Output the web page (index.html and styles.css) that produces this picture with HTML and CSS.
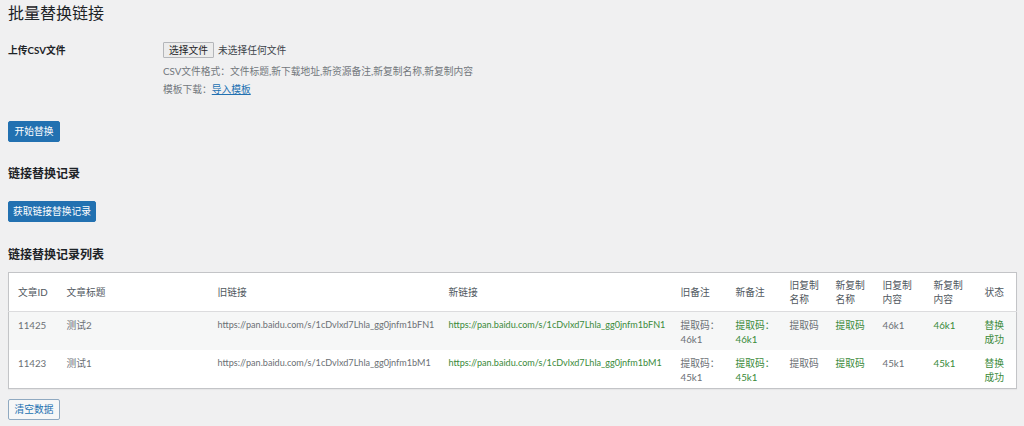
FILE: index.html
```html
<!DOCTYPE html>
<html lang="zh-CN">
<head>
<meta charset="utf-8">
<title>批量替换链接</title>
<link rel="stylesheet" href="styles.css">
</head>
<body>
<div class="wrap">
  <h1 class="page-title">批量替换链接</h1>

  <div class="form-row">
    <div class="form-label">上传CSV文件</div>
    <div class="form-field">
      <div class="file-input"><span class="file-btn">选择文件</span><span class="file-name">未选择任何文件</span></div>
      <p class="desc">CSV文件格式：文件标题,新下载地址,新资源备注,新复制名称,新复制内容</p>
      <p class="desc">模板下载：<a class="link" href="#">导入模板</a></p>
    </div>
  </div>

  <button class="btn btn-primary btn-start">开始替换</button>

  <h2 class="section-title">链接替换记录</h2>
  <button class="btn btn-primary btn-fetch">获取链接替换记录</button>

  <h2 class="section-title section-list">链接替换记录列表</h2>

  <table class="records">
    <colgroup>
      <col class="c-id"><col class="c-title"><col class="c-old"><col class="c-new">
      <col class="c-oldnote"><col class="c-newnote"><col class="c-oldname"><col class="c-newname">
      <col class="c-oldcont"><col class="c-newcont"><col class="c-status">
    </colgroup>
    <thead>
      <tr>
        <th>文章ID</th><th>文章标题</th><th>旧链接</th><th>新链接</th>
        <th>旧备注</th><th>新备注</th><th>旧复制名称</th><th>新复制名称</th>
        <th>旧复制内容</th><th>新复制内容</th><th>状态</th>
      </tr>
    </thead>
    <tbody>
      <tr class="alt">
        <td>11425</td><td>测试2</td>
        <td class="url">https://pan.baidu.com/s/1cDvlxd7Lhla_gg0jnfm1bFN1</td>
        <td class="url ok">https://pan.baidu.com/s/1cDvlxd7Lhla_gg0jnfm1bFN1</td>
        <td>提取码：46k1</td><td class="ok">提取码：46k1</td>
        <td>提取码</td><td class="ok">提取码</td>
        <td>46k1</td><td class="ok">46k1</td>
        <td class="ok">替换成功</td>
      </tr>
      <tr>
        <td>11423</td><td>测试1</td>
        <td class="url">https://pan.baidu.com/s/1cDvlxd7Lhla_gg0jnfm1bM1</td>
        <td class="url ok">https://pan.baidu.com/s/1cDvlxd7Lhla_gg0jnfm1bM1</td>
        <td>提取码：45k1</td><td class="ok">提取码：45k1</td>
        <td>提取码</td><td class="ok">提取码</td>
        <td>45k1</td><td class="ok">45k1</td>
        <td class="ok">替换成功</td>
      </tr>
    </tbody>
  </table>

  <button class="btn btn-secondary btn-clear">清空数据</button>
</div>
</body>
</html>
```

FILE: styles.css
```css
html, body {
  margin: 0;
  padding: 0;
  background: #f0f0f1;
}
body {
  font-family: "Lato", "Noto Sans CJK SC", sans-serif;
  font-size: 9.75px;
  color: #3c434a;
}
.wrap {
  padding: 0 8px;
}
.page-title {
  margin: 0;
  padding-top: 1px;
  font-size: 16px;
  line-height: 23px;
  font-weight: 400;
  color: #1d2327;
}
.form-row {
  display: flex;
  margin-top: 18px;
}
.form-label {
  width: 155px;
  flex: none;
  font-weight: 700;
  color: #1d2327;
  line-height: 16px;
}
.form-field {
  flex: 1;
}
.file-input {
  display: flex;
  align-items: center;
  height: 16px;
  color: #3c434a;
}
.file-btn {
  box-sizing: border-box;
  height: 16px;
  line-height: 14px;
  padding: 0 5px;
  border: 1px solid #b4b6ba;
  background: #ececec;
  border-radius: 1px;
  color: #1d2327;
  margin-right: 4px;
}
.desc {
  margin: 4px 0 0;
  line-height: 18px;
  color: #72777c;
}
.desc + .desc {
  margin-top: 0;
}
.link {
  color: #2271b1;
  text-decoration: underline;
}
.btn {
  display: block;
  box-sizing: border-box;
  font-family: inherit;
  font-size: 9.75px;
  border-radius: 2px;
  padding: 0;
  cursor: pointer;
}
.btn-primary {
  height: 21px;
  line-height: 19px;
  background: #2271b1;
  border: 1px solid #2271b1;
  color: #fff;
}
.btn-secondary {
  height: 21px;
  line-height: 19px;
  background: #f6f7f7;
  border: 1px solid #8fa9c1;
  color: #2271b1;
}
.btn-start {
  margin-top: 23px;
  width: 52px;
}
.btn-fetch {
  margin-top: 18px;
  width: 88px;
}
.btn-clear {
  margin-top: 10px;
  width: 52px;
}
.section-title {
  margin: 23px 0 0;
  font-size: 12px;
  line-height: 18px;
  font-weight: 700;
  color: #1d2327;
}
.section-list {
  margin-top: 24px;
}
.records {
  margin-top: 8px;
  width: 100%;
  table-layout: fixed;
  border-collapse: collapse;
  background: #fff;
  border: 1px solid #c3c4c7;
  box-shadow: 0 1px 1px rgba(0,0,0,0.04);
}
.c-id { width: 49px; }
.c-title { width: 151px; }
.c-old { width: 231px; }
.c-new { width: 232px; }
.c-oldnote { width: 55px; }
.c-newnote { width: 54px; }
.c-oldname { width: 46px; }
.c-newname { width: 47px; }
.c-oldcont { width: 51px; }
.c-newcont { width: 51px; }
.c-status { width: 41px; }
.records th {
  text-align: left;
  font-weight: 400;
  color: #50575e;
  padding: 5px 6px 5px 9px;
  line-height: 14px;
  vertical-align: middle;
  border-bottom: 1px solid #dcdcde;
  height: 28px;
}
.records td {
  padding: 6px 6px 4px 9px;
  line-height: 14px;
  vertical-align: top;
  color: #6b7075;
  height: 28px;
}
.records td.url {
  font-size: 9.1px;
  white-space: nowrap;
  overflow: hidden;
  padding-right: 2px;
}
.records tr.alt td {
  background: #f6f7f7;
}
.records td.ok {
  color: #3a8a3a;
}
```
